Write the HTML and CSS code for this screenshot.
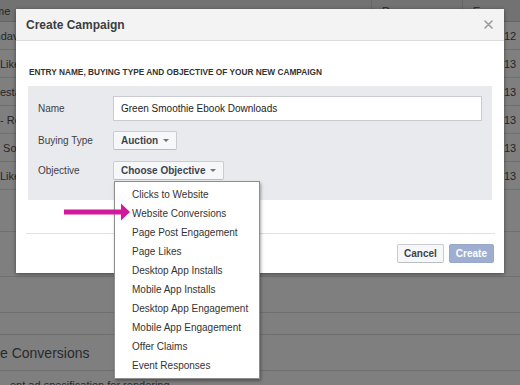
FILE: index.html
```html
<!DOCTYPE html>
<html>
<head>
<meta charset="utf-8">
<link rel="stylesheet" href="styles.css">
</head>
<body>
<div class="page">
  <div class="trow thead">
    <span class="cell c1">Name</span><span class="cell c2">Da</span><span class="cell c3">En</span>
  </div>
  <div class="trow"><span class="cell c1">Ryandavis ad</span><span class="cell c2"></span><span class="cell c3">12</span></div>
  <div class="trow"><span class="cell c1">Likes</span><span class="cell c2"></span><span class="cell c3">13</span></div>
  <div class="trow"><span class="cell c1">estaurant</span><span class="cell c2"></span><span class="cell c3">13</span></div>
  <div class="trow"><span class="cell c1">- Re</span><span class="cell c2"></span><span class="cell c3">13</span></div>
  <div class="trow"><span class="cell c1">&nbsp;Soc</span><span class="cell c2"></span><span class="cell c3">13</span></div>
  <div class="trow"><span class="cell c1">Likes</span><span class="cell c2"></span><span class="cell c3">13</span></div>
  <div class="trow blank r42"></div>
  <div class="trow blank r45"></div>
  <div class="trow blank r36"></div>
  <div class="trow blank r22"></div>
  <div class="section-head">e Conversions</div>
  <div class="section-text">ent ad specification for rendering</div>
</div>

<div class="modal">
  <div class="mhead">
    <h1 class="mtitle">Create Campaign</h1>
    <svg class="close" width="9" height="9" viewBox="0 0 9 9"><path d="M1 1L8 8M8 1L1 8" stroke="#9c9c9c" stroke-width="1.6" stroke-linecap="round"/></svg>
  </div>
  <div class="mbody">
    <div class="stitle">ENTRY NAME, BUYING TYPE AND OBJECTIVE OF YOUR NEW CAMPAIGN</div>
    <div class="panel">
      <div class="frow"><span class="flabel">Name</span><div class="input">Green Smoothie Ebook Downloads</div></div>
      <div class="frow"><span class="flabel">Buying Type</span><span class="btn">Auction<i class="caret"></i></span></div>
      <div class="frow"><span class="flabel">Objective</span><span class="btn">Choose Objective<i class="caret"></i></span></div>
    </div>
  </div>
  <div class="mfoot">
    <span class="btn">Cancel</span><span class="btn primary">Create</span>
  </div>
</div>

<ul class="menu">
  <li>Clicks to Website</li>
  <li>Website Conversions</li>
  <li>Page Post Engagement</li>
  <li>Page Likes</li>
  <li>Desktop App Installs</li>
  <li>Mobile App Installs</li>
  <li>Desktop App Engagement</li>
  <li>Mobile App Engagement</li>
  <li>Offer Claims</li>
  <li>Event Responses</li>
</ul>

<svg class="arrow" width="68" height="20" viewBox="0 0 68 20">
  <rect x="0" y="7.5" width="59" height="5" fill="#d3189c"/>
  <polygon points="57,1.5 66,10 57,18.5" fill="#d3189c"/>
</svg>
</body>
</html>
```

FILE: styles.css
```css
html, body {
  margin: 0;
  padding: 0;
}
body {
  width: 520px;
  height: 385px;
  overflow: hidden;
  position: relative;
  background: #7f7f7f;
  font-family: "Liberation Sans", Arial, Helvetica, sans-serif;
  color: #2a2a2a;
}
.page {
  display: flex;
  flex-direction: column;
}
.trow {
  display: grid;
  grid-template-columns: 371px 91px 1fr;
  height: 28px;
  border-bottom: 1px solid #6f6f6f;
  box-sizing: border-box;
  font-size: 11px;
  line-height: 28px;
  color: #262626;
}
.thead {
  height: 22px;
  line-height: 22px;
  background: #727272;
  border-bottom: 1px solid #666;
}
.thead .c2, .thead .c3 {
  border-left: 1px solid #666;
}
.cell {
  white-space: nowrap;
  overflow: hidden;
}
.c1 { text-indent: 0; }
.thead .c1 { text-indent: -19px; }
.trow:nth-child(2) .c1 { text-indent: -25px; }
.c3 { padding-left: 42px; }
.thead .c2, .thead .c3 { padding-left: 10px; }
.blank { grid-template-columns: 1fr; }
.r42 { height: 42px; }
.r45 { height: 45px; }
.r36 { height: 36px; }
.r22 { height: 22px; }
.section-head {
  height: 36px;
  line-height: 36px;
  font-size: 14px;
  color: #2a2a2a;
  border-bottom: 1px solid #6f6f6f;
  box-sizing: border-box;
}
.section-text {
  padding: 8px 0 0 10px;
  font-size: 11px;
  color: #2a2a2a;
}

/* modal */
.modal {
  position: absolute;
  left: 16px;
  top: 9px;
  width: 488px;
  height: 264px;
  background: #fff;
  box-shadow: 0 1px 4px rgba(0,0,0,0.45);
  display: flex;
  flex-direction: column;
}
.mhead {
  height: 31px;
  background: #f3f3f4;
  border-bottom: 1px solid #dcdcdc;
  display: flex;
  align-items: center;
  justify-content: space-between;
  padding: 0 11px 0 10px;
}
.mtitle {
  margin: 0;
  font-size: 12px;
  font-weight: bold;
  color: #3b3d42;
}
.close { display: block; }
.mbody {
  padding: 25px 12px 0 12px;
}
.stitle {
  font-size: 8.3px;
  font-weight: bold;
  line-height: 12px;
  color: #333;
  padding-left: 1px;
  margin-bottom: 8px;
}
.panel {
  background: #e9eaed;
  height: 114px;
  box-sizing: border-box;
  padding: 10px 10px 0 10px;
  display: flex;
  flex-direction: column;
  gap: 10px;
}
.frow {
  display: flex;
  align-items: center;
}
.flabel {
  width: 75px;
  flex: none;
  font-size: 10px;
  color: #3d4048;
}
.input {
  flex: 1;
  height: 25px;
  box-sizing: border-box;
  background: #fff;
  border: 1px solid #c9cbd0;
  font-size: 10px;
  line-height: 23px;
  padding-left: 7px;
  color: #222;
}
.btn {
  display: inline-flex;
  align-items: center;
  height: 19px;
  box-sizing: border-box;
  padding: 0 7px 0 7px;
  background: #f6f7f9;
  border: 1px solid #c8cbd1;
  border-bottom-color: #b9bcc2;
  border-radius: 2px;
  font-size: 10px;
  font-weight: bold;
  color: #3e4350;
}
.frow:nth-child(3) { margin-top: 1px; }
.caret {
  display: inline-block;
  width: 0;
  height: 0;
  margin-left: 5px;
  border-left: 3px solid transparent;
  border-right: 3px solid transparent;
  border-top: 3.5px solid #6f737c;
}
.mfoot {
  margin: 33px 9px 0 10px;
  border-top: 1px solid #e2e2e2;
  padding: 10px 1px 10px 0;
  display: flex;
  justify-content: flex-end;
  gap: 5px;
}
.mfoot .btn { padding: 0 6px; }
.btn.primary {
  background: #9eaed0;
  border-color: #9aa8c7;
  color: #fff;
}

/* dropdown */
.menu {
  position: absolute;
  left: 114px;
  top: 181px;
  width: 146px;
  height: 198px;
  box-sizing: border-box;
  margin: 0;
  padding: 3px 0 0 0;
  list-style: none;
  background: #fff;
  border: 1px solid #8e8e8e;
  box-shadow: 1px 2px 3px rgba(0,0,0,0.35);
}
.menu li {
  height: 19px;
  line-height: 19px;
  padding-left: 17px;
  font-size: 10px;
  color: #333;
  white-space: nowrap;
}
.arrow {
  position: absolute;
  left: 64px;
  top: 202px;
}
```
